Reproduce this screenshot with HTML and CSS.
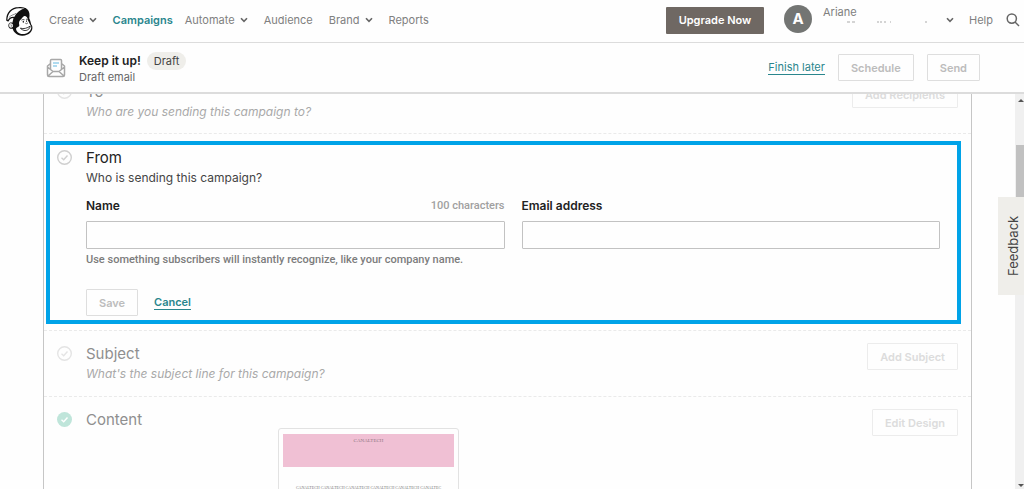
FILE: index.html
```html
<!DOCTYPE html>
<html lang="en">
<head>
<meta charset="utf-8">
<title>Keep it up! – Campaigns</title>
<link rel="stylesheet" href="styles.css">
</head>
<body>
<header class="topbar">
  <a class="logo" href="#" aria-label="Home">
    <svg viewBox="20 15 84 94" width="28" height="31">
      <path d="M44 44 C54 24 70 17 84 25 C91 31 92 42 90 52 C95 62 94 69 99 76 C103 92 88 106 68 105 C52 104 42 94 40 84 C30 86 24 78 28 69 C31 64 36 64 39 66 Z" fill="#111"/>
      <path d="M22 58 C22 36 36 21 58 20 C68 19 76 21 80 24 C63 27 53 36 46 50 C38 48 30 52 26 60 Z" fill="#fff" stroke="#111" stroke-width="4" stroke-linejoin="round"/>
      <path d="M28 50 C36 41 45 42 50 37" fill="none" stroke="#111" stroke-width="1.500"/>
      <path d="M62 58 C68 53 70 47 75 45 C82 45 86 51 86 58 C90 65 92 70 96 77 C98 89 85 100 70 100 C58 99 50 92 50 83 C53 78 60 78 60 73 C58 67 59 62 62 58 Z" fill="#fff"/>
      <path d="M30 69 C35 65 42 70 41 76 C39 83 29 82 29 75 Z" fill="#fff"/>
      <path d="M33 72 L38 74 L35 78" fill="none" stroke="#111" stroke-width="1.500"/>
      <path d="M66 58 Q71 54 76 57 M80 55 Q84 54 86 58 M78 67 Q83 71 86 66" fill="none" stroke="#111" stroke-width="2"/>
      <ellipse cx="72" cy="63" rx="2" ry="3" fill="#111"/>
      <ellipse cx="82" cy="61" rx="1.500" ry="2.500" fill="#111"/>
      <path d="M63 82 C73 86 84 82 93 76 C92 85 83 91 74 89 C68 87 65 85 63 82 Z" fill="#fff" stroke="#111" stroke-width="2.500"/>
    </svg>
  </a>
  <nav class="nav">
    <a href="#">Create <svg class="chev" viewBox="0 0 8 6"><path d="M1 1.2 4 4.4 7 1.2"/></svg></a>
    <a href="#" class="current">Campaigns</a>
    <a href="#">Automate <svg class="chev" viewBox="0 0 8 6"><path d="M1 1.2 4 4.4 7 1.2"/></svg></a>
    <a href="#">Audience</a>
    <a href="#">Brand <svg class="chev" viewBox="0 0 8 6"><path d="M1 1.2 4 4.4 7 1.2"/></svg></a>
    <a href="#">Reports</a>
  </nav>
  <button class="upgrade" type="button">Upgrade Now</button>
  <button class="account" type="button">
    <span class="avatar">A</span>
    <span class="who">
      <span>Ariane</span>
      <svg viewBox="0 0 110 4" width="110" height="4"><path d="M24 2h3M29 2h3M54 2h2M57 2h2M61 2h2M67 2h1M102 2h2" stroke="#aaa"/></svg>
    </span>
    <svg class="chev" viewBox="0 0 8 6"><path d="M1 1.2 4 4.4 7 1.2"/></svg>
  </button>
  <a class="help" href="#">Help</a>
  <button class="search" type="button" aria-label="Search">
    <svg viewBox="0 0 14 14" width="14" height="14"><circle cx="5.8" cy="5.6" r="4.6"/><path d="M9 9l4 4"/></svg>
  </button>
</header>

<section class="campaign">
  <svg class="mail" viewBox="0 0 20 20" width="20" height="20">
    <path d="M4.500 5.500 1.500 8v9q0 1.500 1.500 1.500h14q1.500 0 1.500-1.500V8l-3-2.500M1.500 9l5.500 4.500h6L18.500 9M2 18l5-4.500M18 18l-5-4.500M4.500 11V2.500q0-1 1-1h9q1 0 1 1V11" fill="none" stroke="#a8a8a8" stroke-width="1.500"/>
    <path d="M7 5h6M7 8h4" stroke="#62b8df" stroke-width="1.200"/>
  </svg>
  <div class="campaign-name">
    <div class="campaign-line"><h1>Keep it up!</h1><span class="badge">Draft</span></div>
    <p>Draft email</p>
  </div>
  <a class="link finish" href="#">Finish later</a>
  <button class="btn" type="button">Schedule</button>
  <button class="btn" type="button">Send</button>
</section>

<main class="stage">
  <div class="card">
    <section class="row faded">
      <svg class="tick" viewBox="0 0 15 15"><circle cx="7.500" cy="7.500" r="6.800"/><path d="M4.500 7.800 6.700 9.800 10.500 5.500"/></svg>
      <div class="text"><h2>To</h2><p>Who are you sending this campaign to?</p></div>
      <button class="btn" type="button">Add Recipients</button>
    </section>

    <section class="row open">
      <svg class="tick" viewBox="0 0 15 15"><circle cx="7.500" cy="7.500" r="6.800"/><path d="M4.500 7.800 6.700 9.800 10.500 5.500"/></svg>
      <form class="text">
        <h2>From</h2>
        <p>Who is sending this campaign?</p>
        <div class="fields">
          <div class="field">
            <div class="label-line"><label for="name">Name</label><span>100 characters</span></div>
            <input id="name" type="text">
            <small>Use something subscribers will instantly recognize, like your company name.</small>
          </div>
          <div class="field">
            <div class="label-line"><label for="email">Email address</label></div>
            <input id="email" type="email">
          </div>
        </div>
        <div class="actions">
          <button class="btn" type="button">Save</button>
          <a class="link strong" href="#">Cancel</a>
        </div>
      </form>
    </section>

    <section class="row faded later">
      <svg class="tick" viewBox="0 0 15 15"><circle cx="7.500" cy="7.500" r="6.800"/><path d="M4.500 7.800 6.700 9.800 10.500 5.500"/></svg>
      <div class="text"><h2>Subject</h2><p>What's the subject line for this campaign?</p></div>
      <button class="btn" type="button">Add Subject</button>
    </section>

    <section class="row faded later">
      <svg class="tick done" viewBox="0 0 15 15"><circle cx="7.500" cy="7.500" r="7.500"/><path d="M4.500 7.800 6.700 9.800 10.500 5.500"/></svg>
      <div class="text">
        <h2>Content</h2>
        <div class="preview">
          <div class="banner">CANALTECH</div>
          <div class="copy">CANALTECH CANALTECH CANALTECH CANALTECH CANALTECH CANALTEC</div>
        </div>
      </div>
      <button class="btn" type="button">Edit Design</button>
    </section>
  </div>
  <div class="scrollbar">
    <svg viewBox="0 0 8 5" width="8" height="5"><path d="M1 4 4 1 7 4Z"/></svg>
    <div class="thumb"></div>
    <svg viewBox="0 0 8 5" width="8" height="5" class="down"><path d="M1 1 4 4 7 1Z"/></svg>
  </div>
  <button class="feedback" type="button">Feedback</button>
</main>
</body>
</html>
```
FILE: styles.css
```css
* { box-sizing: border-box; }
body {
  margin: 0;
  height: 100vh;
  display: flex;
  flex-direction: column;
  overflow: hidden;
  background: #fefefe;
  color: #444;
  font: 12px/16px Inter, "Liberation Sans", sans-serif;
}
h1, h2, p { margin: 0; }
button { font: inherit; cursor: pointer; }
a { color: inherit; text-decoration: none; }

.topbar {
  display: flex;
  align-items: center;
  height: 43px;
  flex: none;
  padding: 0 4px 2px 6px;
  border-bottom: 1px solid #dcdcdc;
  color: #808080;
  font-size: 11px;
}
.logo { display: flex; margin-right: 15px; padding-top: 2px; }
.nav { display: flex; gap: 16px; margin-right: auto; }
.nav a { display: flex; align-items: center; gap: 5px; }
.nav .current { margin-right: -4px; color: #2a868d; font-weight: 600; }
.chev { width: 8px; height: 6px; flex: none; fill: none; stroke: #666; stroke-width: 1.6; }
.upgrade {
  width: 98px;
  height: 27px;
  padding: 0;
  border: 0;
  border-radius: 1px;
  background: #6f6863;
  color: #fff;
  font-weight: 600;
}
.account {
  display: flex;
  align-items: center;
  margin: 0 15px 0 20px;
  padding: 0;
  border: 0;
  background: none;
  color: #808080;
}
.avatar {
  width: 28px;
  height: 28px;
  margin-bottom: 2px;
  border-radius: 50%;
  background: #737573;
  color: #fff;
  font-size: 15px;
  font-weight: 700;
  line-height: 28px;
}
.who { display: flex; flex-direction: column; width: 134px; padding: 0 0 12px 11px; text-align: left; }
.help { margin-right: 13px; }
.search { display: flex; padding: 0; border: 0; background: none; }
.search svg { fill: none; stroke: #666; stroke-width: 1.5; }

.campaign {
  display: flex;
  align-items: center;
  height: 51px;
  flex: none;
  padding: 0 44px 0 46px;
  border-bottom: 2px solid #dcdcdc;
}
.mail { margin-right: 13px; }
.campaign-name { margin-right: auto; }
.campaign-line { display: flex; align-items: center; gap: 6px; }
.campaign h1 { color: #222; font-size: 12px; font-weight: 600; }
.badge { padding: 0 7px; border-radius: 9px; background: #efeeea; font-size: 11px; line-height: 18px; }
.campaign p { color: #666; font-size: 11px; line-height: 14px; }
.campaign .btn { margin-left: 13px; }

.link { color: #2a868d; border-bottom: 1px solid #2a868d; font-size: 11px; line-height: 14px; }
.strong { font-weight: 600; }
.btn {
  flex: none;
  height: 27px;
  padding: 0 12px;
  border: 1px solid #dedede;
  border-radius: 1px;
  background: #fefefe;
  color: #bcbcbc;
  font-size: 11px;
  font-weight: 600;
}

.stage { position: relative; flex: 1; min-height: 0; display: flex; overflow: hidden; }
.card {
  flex: 1;
  margin: -26px 43px 0 43px;
  border: solid #c6c6c6;
  border-width: 0 1px;
}
.row {
  position: relative;
  display: flex;
  align-items: flex-start;
  padding: 13px;
  border-bottom: 1px dashed #eaeaea;
}
.later { padding: 12px 13px 14px; }
.text { flex: 1; min-width: 0; }
.row h2 { color: #222; font-size: 15px; font-weight: 400; line-height: 22px; }
.row p { line-height: 17px; }
.tick { width: 15px; height: 15px; flex: none; margin: 3px 14px 0 0; fill: none; stroke: #cfcfcf; stroke-width: 1.4; }
.tick.done { stroke: #fff; }
.tick.done circle { fill: #bfe5da; stroke: none; }
.faded h2 { color: #8f8f8f; }
.faded p { color: #a9a9a9; font-style: italic; }
.faded .tick:not(.done) { stroke: #e4e4e4; }
.faded .btn { border-color: #ececec; color: #dcdcdc; }

.open { padding: 13px 31px 14px 13px; }
.open::after {
  content: "";
  position: absolute;
  inset: 7px 10px 6px 2px;
  border: 4px solid #00a3e8;
  pointer-events: none;
}
.fields { display: grid; grid-template-columns: 1fr 1fr; gap: 17px; padding-top: 12px; }
.field { display: flex; flex-direction: column; }
.label-line { display: flex; justify-content: space-between; color: #222; font-weight: 600; font-size: 12px; line-height: 16px; }
.label-line span { color: #a0a0a0; font: 500 11px/16px Roboto, sans-serif; }
.field input {
  width: 100%;
  height: 28px;
  margin-top: 7px;
  padding: 0 8px;
  border: 1px solid #c2c2c2;
  border-radius: 1px;
  background: #fefefe;
  font: inherit;
}
.field small { color: #7c7c7c; font: 500 11px/22px Roboto, sans-serif; }
.actions { display: flex; align-items: center; gap: 16px; padding: 18px 0 0; }

.preview {
  width: 181px;
  height: 90px;
  margin: -3px 0 0 192px;
  padding: 5px 4px;
  border: 1px solid #e2e2e2;
  border-radius: 3px;
}
.banner { height: 33px; background: #f0c0d4; color: #8d7480; font: 5px/14px "Liberation Serif", serif; text-align: center; }
.copy { padding: 17px 0 0; color: #777; font: 4px/8px "Liberation Serif", serif; text-align: center; white-space: nowrap; }

.scrollbar { width: 9px; display: flex; flex-direction: column; align-items: flex-end; padding: 4px 0 1px; background: #f0f0f0; overflow: hidden; }
.scrollbar svg { fill: #555; margin-right: -1px; flex: none; }
.thumb { width: 8px; height: 96px; margin-top: 42px; background: #c1c1c1; }
.scrollbar .down { margin-top: auto; }
.feedback {
  position: absolute;
  top: 103px;
  right: 0;
  width: 26px;
  height: 98px;
  padding: 0 4px 0 0;
  border: 0;
  background: #efeeea;
  color: #444;
  font-size: 13px;
  writing-mode: vertical-rl;
  rotate: 180deg;
}
```
